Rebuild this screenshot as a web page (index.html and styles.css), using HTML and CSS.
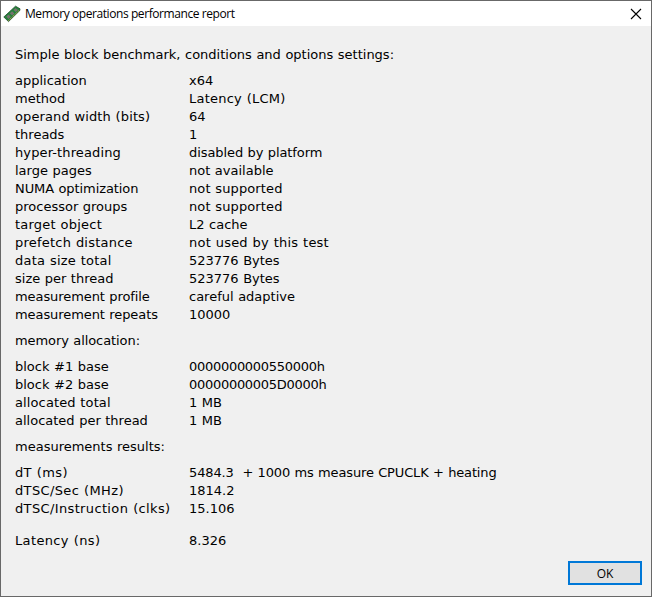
FILE: index.html
```
<!DOCTYPE html>
<html lang="en">
<head>
<meta charset="utf-8">
<title>Memory operations performance report</title>
<link rel="stylesheet" href="styles.css">
</head>
<body>
<div class="window">
  <header class="titlebar">
    <svg class="chip" width="18" height="18" viewBox="0 0 18 18">
      <path d="M.8 12 12.500 1.200 17 3.800 16.800 5.500 5.500 16.600Z" fill="#23823a" stroke="#1d4a28" stroke-width=".8"/>
      <path d="M5.300 15.800 16.500 5" stroke="#c0a850" stroke-width="1" stroke-dasharray="1.500 .7"/>
      <path d="m3.300 11.600 2.200-2.100 2.300 2.200-2.200 2.200Zm3.500-3.300 2.300-2.100 2.300 2.200-2.300 2.200Zm3.700-3.400 2-1.900 2.500 1.900-2.200 2.200Z" fill="#77716f"/>
    </svg>
    <h1 class="title">Memory operations performance report</h1>
    <svg class="close" width="12" height="12" viewBox="0 0 12 12"><path d="M1 1 11 11M11 1 1 11" stroke="#000" stroke-width="1.100"/></svg>
  </header>
  <main class="report">
    <p class="heading">Simple block benchmark, conditions and options settings:</p>
    <dl class="rows">
      <dt>application</dt><dd>x64</dd>
      <dt>method</dt><dd class="open">Latency (LCM)</dd>
      <dt class="loose">operand width (bits)</dt><dd>64</dd>
      <dt>threads</dt><dd>1</dd>
      <dt class="loose">hyper-threading</dt><dd class="tight">disabled by platform</dd>
      <dt>large pages</dt><dd>not available</dd>
      <dt class="tight">NUMA optimization</dt><dd class="loose">not supported</dd>
      <dt>processor groups</dt><dd class="loose">not supported</dd>
      <dt class="open">target object</dt><dd>L2 cache</dd>
      <dt class="open">prefetch distance</dt><dd class="open">not used by this test</dd>
      <dt class="open">data size total</dt><dd>523776 Bytes</dd>
      <dt>size per thread</dt><dd>523776 Bytes</dd>
      <dt class="tight">measurement profile</dt><dd>careful adaptive</dd>
      <dt class="tight">measurement repeats</dt><dd>10000</dd>
    </dl>
    <p class="heading tight">memory allocation:</p>
    <dl class="rows">
      <dt>block #1 base</dt><dd class="num">0000000000550000h</dd>
      <dt>block #2 base</dt><dd class="num">00000000005D0000h</dd>
      <dt class="loose">allocated total</dt><dd>1 MB</dd>
      <dt>allocated per thread</dt><dd>1 MB</dd>
    </dl>
    <p class="heading">measurements results:</p>
    <dl class="rows">
      <dt class="wide">dT (ms)</dt><dd class="measure">5484.3&nbsp; + 1000 ms measure CPUCLK + heating</dd>
      <dt class="wide">dTSC/Sec (MHz)</dt><dd>1814.2</dd>
      <dt class="wide">dTSC/Instruction (clks)</dt><dd>15.106</dd>
    </dl>
    <dl class="rows latency">
      <dt class="wide">Latency (ns)</dt><dd>8.326</dd>
    </dl>
  </main>
  <footer class="actions"><button class="ok">OK</button></footer>
</div>
</body>
</html>
```
FILE: styles.css
```
* { box-sizing: border-box; margin: 0; padding: 0; }
body { width: 652px; height: 597px; overflow: hidden; }
.window {
  height: 597px;
  display: flex;
  flex-direction: column;
  background: #f0f0f0;
  border: 1px solid #686868;
  color: #000;
}
.titlebar {
  display: flex;
  align-items: center;
  height: 25px;
  padding: 0 9px 0 2px;
  background: #fff;
}
.title {
  flex: 1;
  margin-left: 4px;
  font: 400 12px/24px "Open Sans", sans-serif;
  letter-spacing: -0.42px;
  white-space: nowrap;
}
.report {
  flex: 1;
  padding: 20px 14px 0;
  font: 13px/18px "DejaVu Sans", sans-serif;
  word-spacing: 0.4px;
  white-space: nowrap;
}
.rows {
  display: grid;
  grid-template-columns: 174px 1fr;
  margin: 8px 0;
}
.num { letter-spacing: -0.29px; }
.tight { letter-spacing: -0.08px; }
.loose { letter-spacing: 0.12px; }
.open { letter-spacing: 0.22px; }
.wide { letter-spacing: 0.36px; }
.measure { letter-spacing: -0.14px; }
.latency { margin-top: 14px; }
.actions {
  display: flex;
  justify-content: flex-end;
  padding: 0 9px 11px;
}
.ok {
  width: 74px;
  height: 24px;
  border: 2px solid #0078d7;
  background: #e1e1e1;
  color: #000;
  font: 12px/19px "Open Sans", sans-serif;
}
```
